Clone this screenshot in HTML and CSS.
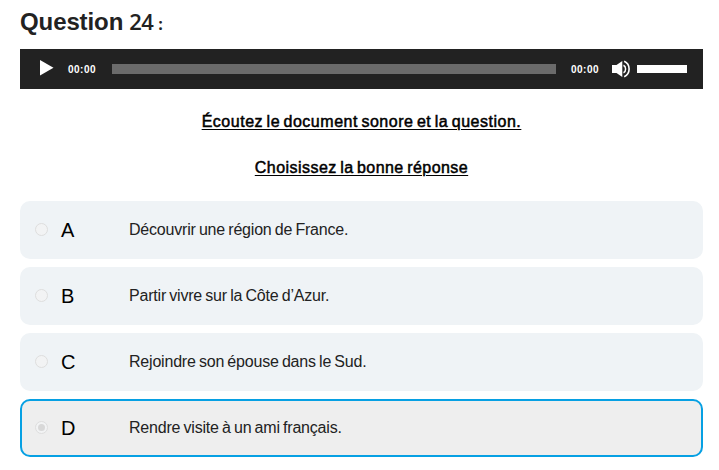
FILE: index.html
```html
<!DOCTYPE html>
<html lang="fr">
<head>
<meta charset="utf-8">
<title>Question 24</title>
<link rel="stylesheet" href="styles.css">
</head>
<body>
<main class="quiz">
  <h1 class="title"><span>Question</span><span class="title-number">24</span><span class="title-colon">:</span></h1>
  <div class="player">
    <svg class="play" width="14" height="16" viewBox="0 0 14 16"><path d="M0 0 L13.5 7.7 L0 15.5 Z" fill="#fff"/></svg>
    <span class="time">00:00</span>
    <div class="rail"></div>
    <span class="time">00:00</span>
    <svg class="speaker" width="18" height="18" viewBox="0 0 18 18" fill="none" stroke="#fff"><path d="M0 5H4.5L10.3 1V17L4.5 13H0Z" fill="#fff" stroke="none"/><path d="M11.5 5.2Q13.6 6.2 13.6 9T11.5 12.8" stroke-width="1.5"/><path d="M12.2 1.3Q17.1 3.6 17.1 9T12.2 16.7" stroke-width="1.6"/></svg>
    <div class="volume"></div>
  </div>
  <p class="prompt prompt-listen"><span>Écoutez le document sonore et la question.</span></p>
  <p class="prompt prompt-choose"><span>Choisissez la bonne réponse</span></p>
  <div class="answers">
    <div class="answer"><i class="radio"></i><span class="letter">A</span><span class="text">Découvrir une région de France.</span></div>
    <div class="answer"><i class="radio"></i><span class="letter">B</span><span class="text">Partir vivre sur la Côte d’Azur.</span></div>
    <div class="answer"><i class="radio"></i><span class="letter">C</span><span class="text">Rejoindre son épouse dans le Sud.</span></div>
    <div class="answer selected"><i class="radio"></i><span class="letter">D</span><span class="text">Rendre visite à un ami français.</span></div>
  </div>
</main>
</body>
</html>
```
FILE: styles.css
```css
* { box-sizing: border-box; }
body { margin: 0; background: #fff; color: #000; font-family: "Liberation Sans", Arial, sans-serif; }
.quiz { width: 683px; margin-left: 20px; }
.title { display: flex; align-items: baseline; height: 49px; margin: 0; padding-top: 6px; font-size: 24px; line-height: 30px; letter-spacing: -0.1px; color: #222; }
.title-number { margin-left: 6px; font-family: "Open Sans", sans-serif; font-size: 22px; font-weight: 600; letter-spacing: -0.6px; }
.title-colon { margin-left: 5px; font-family: "Open Sans", sans-serif; font-size: 16px; }
.player { display: flex; align-items: center; height: 40px; padding: 0 16px 0 20px; background: #222; }
.play { margin-top: -2px; }
.time { width: 28px; margin-left: 14px; padding-top: 1px; font-size: 10px; font-weight: 700; line-height: 12px; letter-spacing: 0.5px; color: #fff; }
.rail { flex: 1; height: 10px; margin: 0 1px 0 16px; background: #6b6b6b; }
.speaker { margin-left: 13px; }
.volume { width: 50px; height: 8px; margin-left: 7px; background: #fff; }
.prompt { margin: 0; text-align: center; font-size: 16px; line-height: 24px; word-spacing: -1.5px; -webkit-text-stroke: 0.5px #000; text-decoration: underline; text-decoration-thickness: 1px; text-underline-offset: 2px; }
.prompt-listen { margin-top: 21px; letter-spacing: 0.52px; }
.prompt-choose { margin-top: 22px; letter-spacing: 0.46px; }
.answers { display: grid; gap: 8px; margin-top: 21px; }
.answer { display: flex; align-items: center; height: 58px; padding-left: 15px; border-radius: 10px; background: #eff3f6; }
.answer.selected { padding-left: 13px; border: 2px solid #06a0e3; background: #eee; }
.radio { display: grid; place-items: center; width: 13px; height: 13px; margin-top: -1px; border: 1px solid #dedede; border-radius: 50%; background: #f2f3f4; }
.selected .radio::after { content: ""; width: 7px; height: 7px; border-radius: 50%; background: #d8d8d8; }
.letter { width: 68px; margin-left: 13px; font-size: 20px; line-height: 24px; }
.text { font-size: 16px; line-height: 24px; color: #222; letter-spacing: -0.2px; word-spacing: -1px; }
```
